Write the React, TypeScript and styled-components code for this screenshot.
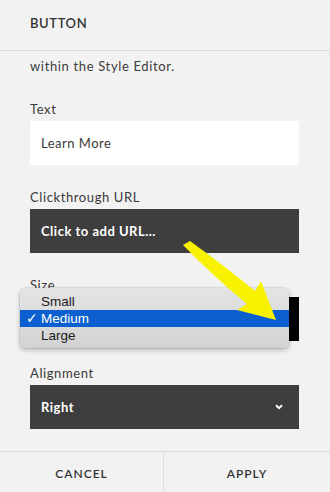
import React from "react";
import styled, { createGlobalStyle } from "styled-components";

const Global = createGlobalStyle`
  html, body { margin: 0; padding: 0; background: #f2f2f2; }
  * { box-sizing: border-box; }
`;

const Panel = styled.div`
  width: 330px;
  height: 492px;
  background: #f2f2f2;
  display: flex;
  flex-direction: column;
  font-family: Lato, "Open Sans", sans-serif;
  color: #3a3a3a;
  position: relative;
  overflow: hidden;
`;

const Header = styled.div`
  height: 51px;
  flex: none;
  padding: 15px 30px 0;
  border-bottom: 1px solid #dcdcdc;
  font-size: 13px;
  font-weight: 600;
  letter-spacing: 0.6px;
  line-height: 16px;
  color: #333;
`;

const Content = styled.div`
  flex: 1;
  padding: 7px 31px 0 30px;
  overflow: hidden;
`;

const Para = styled.p`
  margin: 0 0 27px;
  font-size: 13px;
  line-height: 16px;
  color: #3c3c3c;
  letter-spacing: 0.65px;
`;

const Field = styled.div`
  margin-bottom: 24px;
  position: relative;
`;

const Label = styled.div`
  font-size: 13px;
  line-height: 16px;
  margin-bottom: 4px;
  color: #3a3a3a;
  letter-spacing: 0.6px;
`;

const Box = styled.div<{ $variant: "light" | "dark" | "black" }>`
  height: 44px;
  display: flex;
  align-items: center;
  justify-content: space-between;
  padding: 0 16px 0 11px;
  font-size: 13px;
  letter-spacing: 0.5px;
  background: ${(p) =>
    p.$variant === "light" ? "#ffffff" : p.$variant === "dark" ? "#3e3e3e" : "#000"};
  color: ${(p) => (p.$variant === "light" ? "#3a3a3a" : "#ffffff")};
  font-weight: ${(p) => (p.$variant === "light" ? 400 : 700)};
`;

const Menu = styled.div`
  position: absolute;
  left: -10px;
  top: 11px;
  width: 269px;
  height: 60px;
  padding-top: 5px;
  border-radius: 5px;
  background: linear-gradient(#e4e4e4, #d2d2d2);
  box-shadow: 0 2px 5px rgba(0, 0, 0, 0.25), 0 0 0 0.5px rgba(0, 0, 0, 0.12);
  font-family: "Liberation Sans", Arial, sans-serif;
  font-size: 13.5px;
  z-index: 2;
`;

const Item = styled.div<{ $selected?: boolean }>`
  height: 17px;
  line-height: 17px;
  padding-left: 21px;
  position: relative;
  color: ${(p) => (p.$selected ? "#fff" : "#1a1a1a")};
  background: ${(p) => (p.$selected ? "#0b5fce" : "transparent")};
`;

const Check = styled.span`
  position: absolute;
  left: 6px;
  top: 0;
  font-size: 14px;
  font-weight: 700;
  font-family: "DejaVu Sans", sans-serif;
`;

const Footer = styled.div`
  height: 41px;
  flex: none;
  border-top: 1px solid #dcdcdc;
  display: grid;
  grid-template-columns: 164px 1fr;
`;

const FooterBtn = styled.div<{ $divider?: boolean }>`
  display: flex;
  align-items: center;
  justify-content: center;
  padding-top: 2px;
  font-size: 12px;
  font-weight: 600;
  letter-spacing: 1px;
  color: #333;
  border-right: ${(p) => (p.$divider ? "1px solid #dcdcdc" : "none")};
`;

const Arrow = styled.svg`
  position: absolute;
  left: 0;
  top: 0;
  z-index: 3;
  pointer-events: none;
`;

export default function App() {
  return (
    <>
      <Global />
      <Panel>
        <Header>BUTTON</Header>
        <Content>
          <Para>within the Style Editor.</Para>
          <Field>
            <Label>Text</Label>
            <Box $variant="light">Learn More</Box>
          </Field>
          <Field>
            <Label>Clickthrough URL</Label>
            <Box $variant="dark">Click to add URL...</Box>
          </Field>
          <Field>
            <Label>Size</Label>
            <Box $variant="black">Medium</Box>
            <Menu>
              <Item>Small</Item>
              <Item $selected>
                <Check>✓</Check>Medium
              </Item>
              <Item>Large</Item>
            </Menu>
          </Field>
          <Field>
            <Label>Alignment</Label>
            <Box $variant="dark">
              Right
              <svg width="8" height="6" viewBox="0 0 8 6">
                <path d="M1 1.2 L4 4.2 L7 1.2" fill="none" stroke="#fff" strokeWidth="2" />
              </svg>
            </Box>
          </Field>
        </Content>
        <Footer>
          <FooterBtn $divider>CANCEL</FooterBtn>
          <FooterBtn>APPLY</FooterBtn>
        </Footer>
        <Arrow width="330" height="492" viewBox="0 0 330 492">
          <path
            d="M183 245 L190 241 Q226 267 255 291 L261 281 L276 320 L237 310 L247 304 Q213 276 183 245 Z"
            fill="#f8f200"
          />
        </Arrow>
      </Panel>
    </>
  );
}
